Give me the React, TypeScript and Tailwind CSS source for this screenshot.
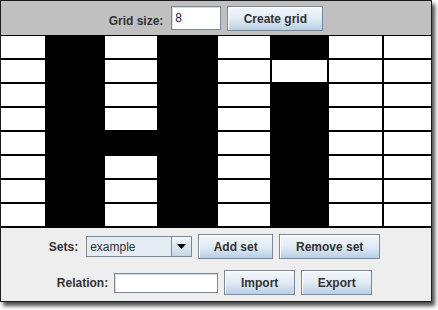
import React from "react";

const pattern = [
  "01010100",
  "01010000",
  "01010100",
  "01010100",
  "01110100",
  "01010100",
  "01010100",
  "01010100",
];

function OceanButton({ label, width }: { label: string; width: string }) {
  return (
    <button
      className={`${width} h-[25px] border border-[#7a8a99] bg-gradient-to-b from-[#f3f7fb] via-[#e2ebf5] to-[#b8cfe5] shadow-[inset_1px_1px_0_#ffffff] text-[12px] font-bold text-[#333333] leading-none`}
    >
      {label}
    </button>
  );
}

export default function App() {
  return (
    <div
      className="w-[438px] h-[310px] bg-white"
      style={{ fontFamily: '"Liberation Sans", Arial, sans-serif' }}
    >
      <div className="w-[432px] h-[302px] border border-[#1c1c1c] flex flex-col shadow-[3px_4px_4px_rgba(0,0,0,0.7)]">
        {/* top bar */}
        <div className="h-[34px] bg-[#c0c0c0] flex items-start justify-center pt-[5px] gap-[6px]">
          <span className="text-[12px] font-bold text-[#333333] mt-[6px] mr-[2px]">Grid size:</span>
          <div className="w-[50px] h-[24px] border border-[#7a8a99] bg-white shadow-[inset_1px_1px_0_#d8d8d8] flex items-center px-[3px] text-[12px] text-[#1a1a4a]">
            8
          </div>
          <OceanButton label="Create grid" width="w-[96px]" />
        </div>

        {/* cells */}
        <div className="bg-black pt-[1px] pb-[2px] grid grid-cols-[44px_56px_52px_57px_52px_55px_53px_47px] auto-rows-[22px] gap-[2px]">
          {pattern.map((row, r) =>
            row.split("").map((c, i) => (
              <div key={`${r}-${i}`} className={c === "1" ? "bg-black" : "bg-white"} />
            ))
          )}
        </div>

        {/* bottom panel */}
        <div className="flex-1 bg-[#eeeeee] flex flex-col items-center pt-[6px] gap-[11px]">
          <div className="flex items-center gap-[6px] mr-[3px]">
            <span className="text-[12px] font-bold text-[#333333] mr-[2px]">Sets:</span>
            <div className="w-[106px] h-[21px] border border-[#7a8a99] flex">
              <div className="flex-1 bg-[#e3ebf3] flex items-center px-[3px] text-[12px] text-[#333333]">
                example
              </div>
              <div className="w-[20px] border-l border-[#7a8a99] bg-gradient-to-b from-[#f3f7fb] to-[#c6d7e9] flex items-center justify-center">
                <svg width="9" height="5" viewBox="0 0 9 5">
                  <path d="M0 0H9L4.5 5Z" fill="#000" />
                </svg>
              </div>
            </div>
            <OceanButton label="Add set" width="w-[75px]" />
            <OceanButton label="Remove set" width="w-[101px]" />
          </div>
          <div className="flex items-center gap-[6px] mr-[3px]">
            <span className="text-[12px] font-bold text-[#333333]">Relation:</span>
            <div className="w-[104px] h-[20px] border border-[#7a8a99] bg-white shadow-[inset_1px_1px_0_#d8d8d8]" />
            <OceanButton label="Import" width="w-[71px]" />
            <OceanButton label="Export" width="w-[71px]" />
          </div>
        </div>
      </div>
    </div>
  );
}
